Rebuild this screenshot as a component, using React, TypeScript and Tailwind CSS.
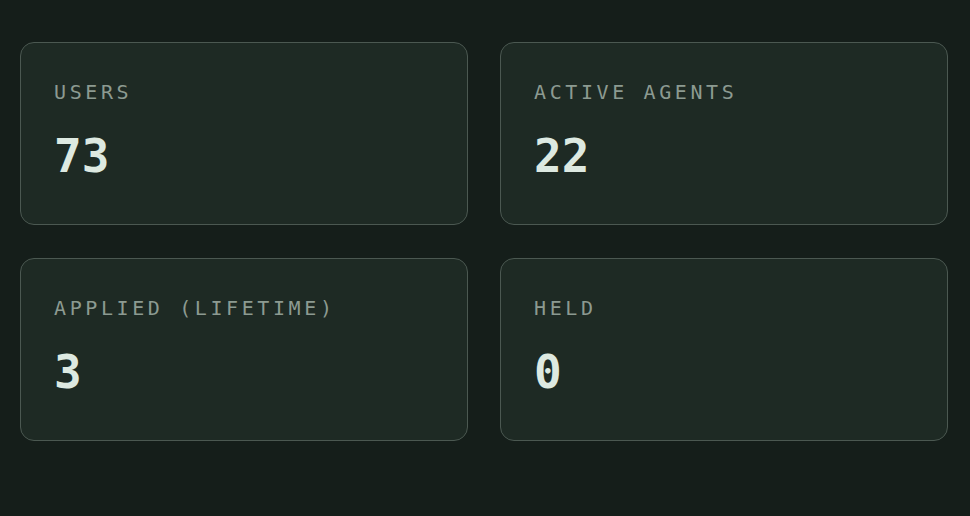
const stats = [
  { label: "Users", value: "73" },
  { label: "Active agents", value: "22" },
  { label: "Applied (lifetime)", value: "3" },
  { label: "Held", value: "0" },
];

export default function App() {
  return (
    <div className="min-h-screen bg-[#151e1a] pl-5 pr-[22px] pt-[42px]">
      <div className="grid grid-cols-2 gap-x-8 gap-y-[32.5px]">
        {stats.map((s) => (
          <div
            key={s.label}
            className="rounded-[14px] border-[1.5px] border-[#4b5851] bg-[#1e2a24] pl-[33px] pt-[37px] pb-[45px]"
          >
            <div
              className="text-[20px] leading-[24px] uppercase tracking-[3.6px] text-[#8c9a91]"
              style={{ fontFamily: '"DejaVu Sans Mono", monospace' }}
            >
              {s.label}
            </div>
            <div
              className="mt-[29px] text-[46px] leading-[46px] font-bold text-[#dde9e1]"
              style={{ fontFamily: '"DejaVu Sans Mono", monospace' }}
            >
              {s.value}
            </div>
          </div>
        ))}
      </div>
    </div>
  );
}
